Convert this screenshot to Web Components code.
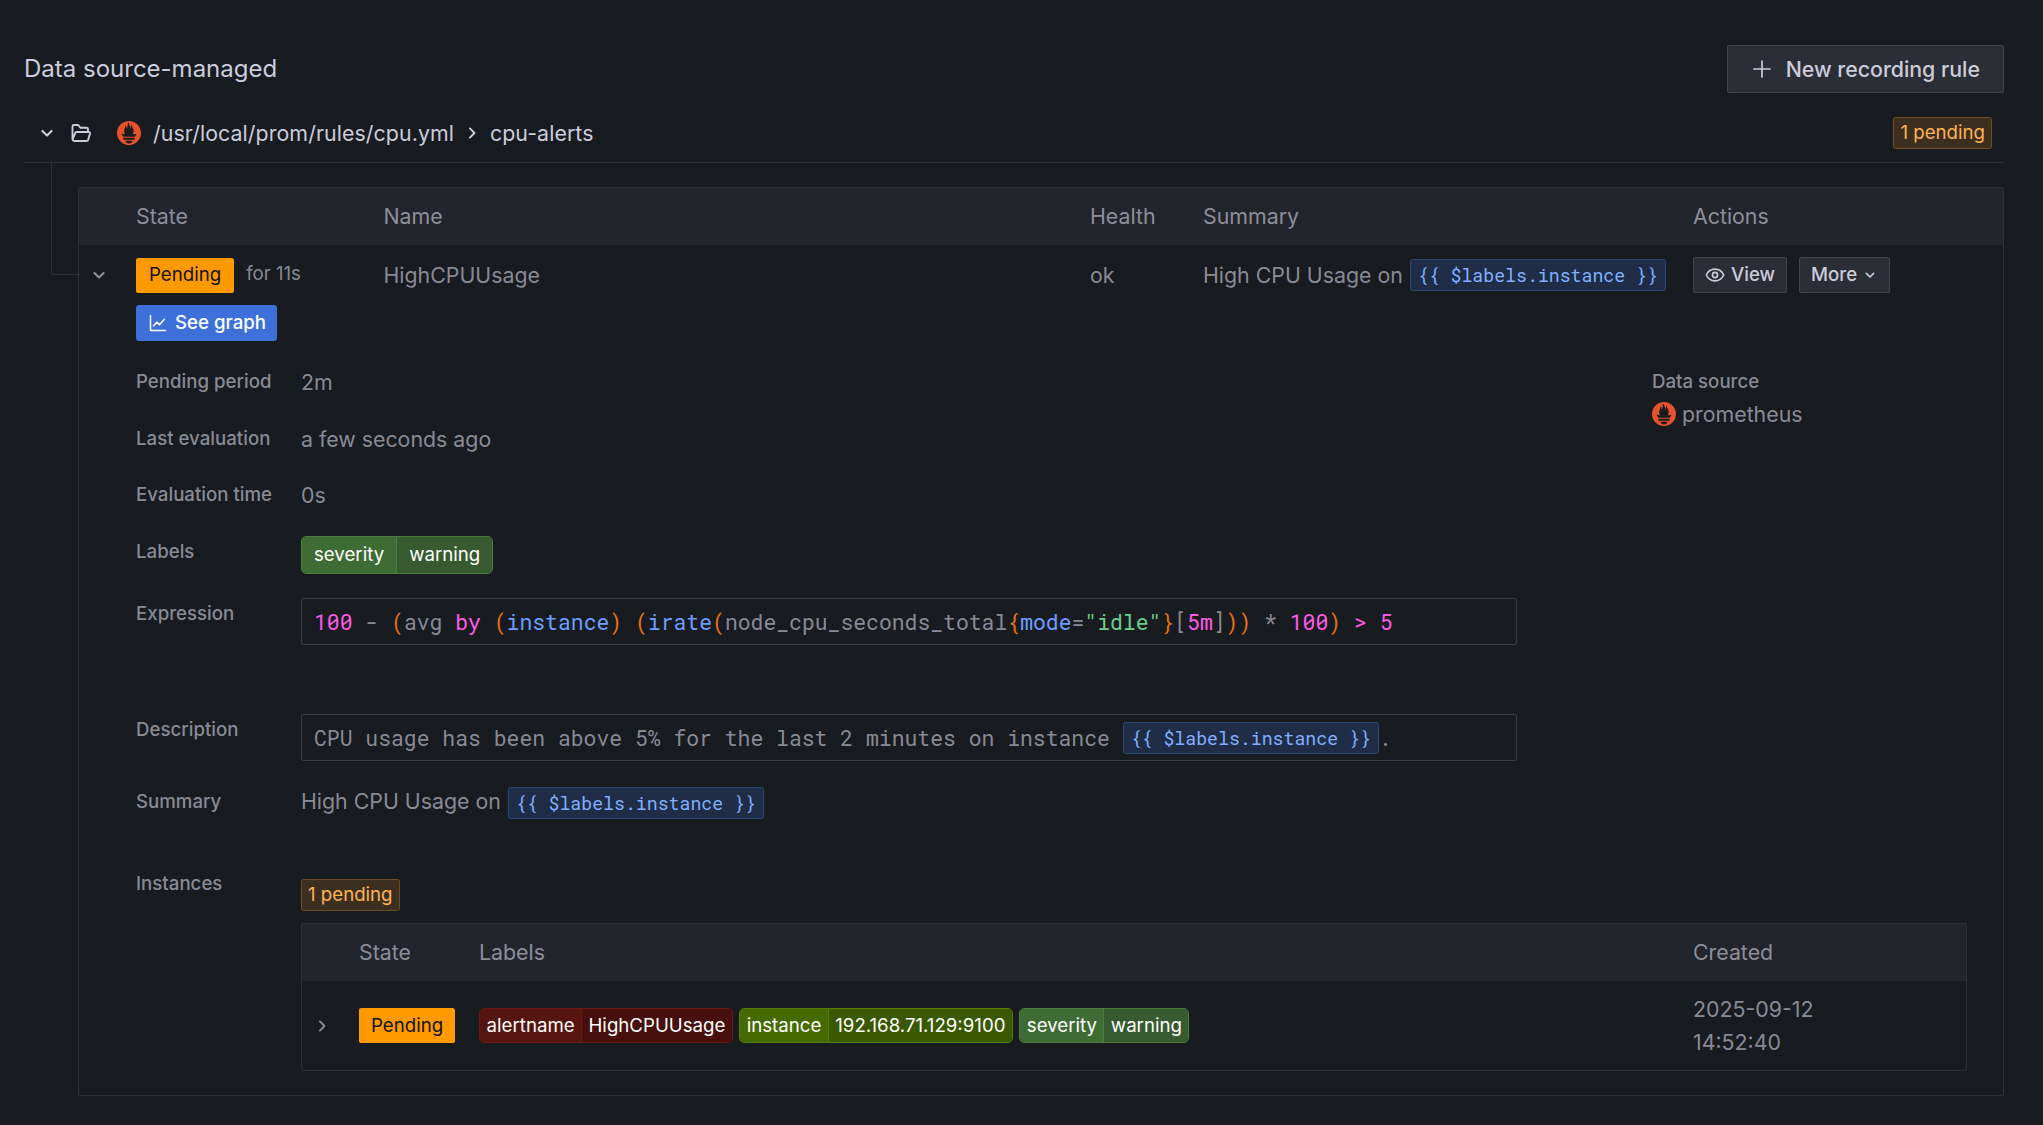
<!DOCTYPE html>
<html lang="en"><head><meta charset="utf-8"><title>Data source-managed</title>
<style>
html,body{margin:0;background:#181b1f}
body{font:21.33px/28px Inter,"Noto Sans",sans-serif;color:#ccccdc}
</style></head><body>
<gf-page>
  <gf-section-head>
    <span slot="title">Data source-managed</span>
    <gf-btn size="lg" slot="action"><gf-icon name="plus" size="24"></gf-icon>New recording rule</gf-btn>
  </gf-section-head>
  <gf-group-head>
    <gf-icon name="down" size="20"></gf-icon>
    <gf-icon name="folder" size="24"></gf-icon>
    <gf-icon name="prom" size="24" style="margin-left:12px"></gf-icon>
    <span slot="path">/usr/local/prom/rules/cpu.yml</span>
    <gf-icon slot="path" name="right" size="20"></gf-icon>
    <span slot="path">cpu-alerts</span>
    <gf-count slot="end">1 pending</gf-count>
  </gf-group-head>
  <gf-rule-box>
    <gf-row head style="--cols:57px 247.5px 706.5px 113px 490px 1fr">
      <span></span><span>State</span><span>Name</span><span>Health</span><span>Summary</span><span>Actions</span>
    </gf-row>
    <gf-row style="--cols:57px 247.5px 706.5px 113px 490px 1fr">
      <gf-cell><gf-icon name="down" size="20" style="margin-left:10px"></gf-icon></gf-cell>
      <gf-stack>
        <gf-cell><gf-state>Pending</gf-state><gf-muted>for 11s</gf-muted></gf-cell>
        <gf-btn kind="primary" style="padding-right:10px"><gf-icon name="chart" size="20"></gf-icon>See graph</gf-btn>
      </gf-stack>
      <gf-cell>HighCPUUsage</gf-cell>
      <gf-cell>ok</gf-cell>
      <gf-cell style="gap:7px">High CPU Usage on <gf-tpl>{{ $labels.instance }}</gf-tpl></gf-cell>
      <gf-cell><gf-btn><gf-icon name="eye" size="22" style="margin:0 -2px 0 -1px"></gf-icon>View</gf-btn><gf-btn>More<gf-icon name="down" size="16" style="margin-left:-2px"></gf-icon></gf-btn></gf-cell>
    </gf-row>
    <gf-details>
      <gf-field style="--h:57px"><span slot="label">Pending period</span>2m</gf-field>
      <gf-field style="--h:56px"><span slot="label">Last evaluation</span>a few seconds ago</gf-field>
      <gf-field style="--h:57px"><span slot="label">Evaluation time</span>0s</gf-field>
      <gf-field style="--h:63px;--nudge:-3px"><span slot="label">Labels</span><gf-labels><gf-label k="severity" v="warning" tone="green"></gf-label></gf-labels></gf-field>
      <gf-field style="--h:116px;--nudge:-4px;--ln:0px"><span slot="label">Expression</span><gf-promql></gf-promql></gf-field>
      <gf-field style="--h:71px;--nudge:-4px;--ln:0px"><span slot="label">Description</span><gf-codebox>CPU usage has been above 5% for the last 2 minutes on instance <gf-tpl>{{ $labels.instance }}</gf-tpl>.</gf-codebox></gf-field>
      <gf-field style="--h:81px;--nudge:-2px"><span slot="label">Summary</span>High CPU Usage on <gf-tpl style="margin-left:1px">{{ $labels.instance }}</gf-tpl></gf-field>
      <gf-source slot="side"></gf-source>
      <gf-field slot="bottom" wide style="--nudge:9px;--ln:2px"><span slot="label">Instances</span>
        <gf-stack gap="12">
          <gf-count>1 pending</gf-count>
          <gf-inner>
            <gf-row head style="--cols:57px 120px 1214px 1fr"><span></span><span>State</span><span>Labels</span><span>Created</span></gf-row>
            <gf-row inner style="--cols:57px 120px 1214px 1fr">
              <gf-cell><gf-icon name="right" size="20" style="margin-left:10px"></gf-icon></gf-cell>
              <gf-cell><gf-state style="padding:0 12px">Pending</gf-state></gf-cell>
              <gf-labels>
                <gf-label k="alertname" v="HighCPUUsage" tone="red" tight></gf-label>
                <gf-label k="instance" v="192.168.71.129:9100" tone="lime" tight></gf-label>
                <gf-label k="severity" v="warning" tone="green" tight></gf-label>
              </gf-labels>
              <gf-date>2025-09-12<br>14:52:40</gf-date>
            </gf-row>
          </gf-inner>
        </gf-stack>
      </gf-field>
    </gf-details>
  </gf-rule-box>
</gf-page>
<script>
const ICONS={
 plus:'<path d="M12 4v16M4 12h16" fill="none" stroke="currentColor" stroke-width="1.7" stroke-linecap="round"/>',
 down:'<path d="M6.5 9.500 12 15l5.500-5.500" fill="none" stroke="currentColor" stroke-width="2.500" stroke-linecap="round" stroke-linejoin="round"/>',
 right:'<path d="M9.500 6.500 15 12l-5.500 5.500" fill="none" stroke="currentColor" stroke-width="2.300" stroke-linecap="round" stroke-linejoin="round"/>',
 folder:'<path d="M3.500 18V5.500a1.500 1.500 0 0 1 1.500-1.500h4.200l2.300 2.800h6a1.500 1.500 0 0 1 1.500 1.500V11M3.500 18.600c.2.800.8 1.400 1.700 1.400h12.400c.8 0 1.400-.5 1.600-1.200l1.800-6.300c.2-.8-.4-1.500-1.200-1.500H7.700c-.7 0-1.300.4-1.500 1.100z" fill="none" stroke="currentColor" stroke-width="1.900" stroke-linejoin="round"/>',
 chart:'<path d="M3 3v17a1 1 0 0 0 1 1h17" fill="none" stroke="currentColor" stroke-width="1.800" stroke-linecap="round"/><path d="M6.500 15.500 10.500 11l3.200 3 6-6.500" fill="none" stroke="currentColor" stroke-width="1.800" stroke-linecap="round" stroke-linejoin="round"/>',
 eye:'<path d="M2.500 12C4.500 7.800 8 5.600 12 5.600s7.500 2.200 9.500 6.400c-2 4.200-5.500 6.400-9.500 6.400S4.500 16.200 2.500 12z" fill="none" stroke="currentColor" stroke-width="1.800" stroke-linejoin="round"/><circle cx="12" cy="12" r="2.800" fill="none" stroke="currentColor" stroke-width="1.800"/>',
 prom:'<g transform="scale(.09375)"><path fill="#e6522c" d="M128.001.667C57.311.667 0 57.971 0 128.664c0 70.69 57.311 127.998 128.001 127.998S256 199.354 256 128.664C256 57.97 198.689.667 128 .667zm0 239.56c-20.112 0-36.419-13.435-36.419-30.004h72.838c0 16.57-16.307 30.004-36.419 30.004zm60.153-39.94H67.842V178.47h120.314v21.816h-.002zm-.432-33.045H68.185c-.398-.458-.804-.91-1.188-1.375-12.315-14.954-15.216-22.76-18.032-30.716-.048-.262 14.933 3.06 25.556 5.45 0 0 5.466 1.265 13.458 2.722-7.673-8.994-12.23-20.428-12.23-32.116 0-25.658 19.68-48.079 12.58-66.201 6.91.562 14.304 14.583 14.804 36.505 7.346-10.152 10.42-28.69 10.42-40.056 0-11.769 7.755-25.44 15.512-25.907-6.915 11.396 1.79 21.165 9.53 45.4 2.902 9.103 2.532 24.423 4.772 34.138.744-20.178 4.213-49.62 17.014-59.784-5.647 12.8.836 28.818 5.27 36.518 7.154 12.424 11.49 21.836 11.49 39.638 0 11.936-4.407 23.173-11.84 31.958 8.452-1.586 14.289-3.016 14.289-3.016l27.45-5.355c.002-.002-3.987 16.401-19.314 32.197z"/></g>'
};
function def(name,html,extra){
  const T=document.createElement('template');T.innerHTML=html;
  customElements.define(name,class extends HTMLElement{
    constructor(){super();this.attachShadow({mode:'open'}).appendChild(T.content.cloneNode(true));}
    connectedCallback(){extra&&extra.call(this);}
  });
}
const MONO='"Roboto Mono","DejaVu Sans Mono","Liberation Mono",monospace';
const BORDER='rgba(204,204,220,.12)';
def('gf-page',`<style>:host{display:block;padding:45px 39px 29px 24px}</style><slot></slot>`);
def('gf-section-head',`<style>:host{display:flex;justify-content:space-between;align-items:center;height:48px}
 .t{font-size:24px;line-height:30px;color:#ccccdc}</style><div class="t"><slot name="title"></slot></div><slot name="action"></slot>`);
def('gf-group-head',`<style>:host{display:flex;align-items:center;box-sizing:border-box;height:70px;border-bottom:1px solid ${BORDER};padding:11px 12px 0 13px;color:#ccccdc}
 .p{display:flex;align-items:center;gap:8px;margin-left:12px;letter-spacing:.08px}.e{margin-left:auto}
 .lead{display:flex;align-items:center;gap:12px}</style>
 <div class="lead"><slot></slot></div><div class="p"><slot name="path"></slot></div><div class="e"><slot name="end"></slot></div>`);
def('gf-rule-box',`<style>:host{display:block;position:relative;margin:24px 0 0 54px;border:1px solid ${BORDER};border-radius:2px}
 :host::before{content:"";position:absolute;left:-28px;top:-25px;width:27px;height:111px;border-left:1px solid ${BORDER};border-bottom:1px solid ${BORDER}}</style><slot></slot>`);
def('gf-row',`<style>:host{display:grid;grid-template-columns:var(--cols);align-items:start;padding-top:12px;color:rgba(204,204,220,.65)}
 :host([head]){background:#22252b;height:57px;padding:0 0 1px;align-items:center;box-sizing:border-box}
 :host([inner]){height:89px;padding:0;align-items:center}</style><slot></slot>`);
def('gf-cell',`<style>:host{display:flex;align-items:center;min-height:36px;gap:12px}</style><slot></slot>`);
def('gf-stack',`<style>:host{display:flex;flex-direction:column;align-items:flex-start;gap:12px}</style><slot></slot>`);
def('gf-muted',`<style>:host{font-size:18.67px;display:inline-block;margin-top:-2px}</style><slot></slot>`);
def('gf-state',`<style>:host{display:inline-flex;align-items:center;justify-content:center;height:35px;padding:0 13px;background:#ff9900;color:#111;border-radius:2.6px;font-size:18.67px;box-sizing:border-box}</style><slot></slot>`);
def('gf-count',`<style>:host{display:inline-flex;align-items:center;height:32px;padding:0 6px;box-sizing:border-box;background:#3d2f20;border:1px solid #6e4d22;border-radius:2.6px;color:#ffb357;font-size:18.67px}</style><slot></slot>`);
def('gf-btn',`<style>:host{display:inline-flex;align-items:center;height:36px;gap:7px;padding:0 11px;box-sizing:border-box;background:#2b2e34;border:1px solid rgba(204,204,220,.14);border-radius:2.6px;color:#ccccdc;font-size:18.67px;font-weight:500;white-space:nowrap}
 :host([size=lg]){height:48px;padding:0 23px 0 22px;font-size:21.33px;gap:12px}
 :host([kind=primary]){background:#3d71d9;border-color:#3d71d9;color:#fff}</style><slot></slot>`);
def('gf-icon',`<svg viewBox="0 0 24 24" part="svg"></svg>`,function(){
  const s=this.getAttribute('size')||20,svg=this.shadowRoot.querySelector('svg');
  svg.innerHTML=ICONS[this.getAttribute('name')]||'';svg.setAttribute('width',s);svg.setAttribute('height',s);
  svg.style.display='block';this.style.display='inline-block';this.style.flex='none';
});
def('gf-tpl',`<style>:host{display:inline-flex;align-items:center;height:32px;box-sizing:border-box;padding:0 7px;background:#1f2d47;border:1px solid #2c4874;border-radius:2.6px;color:#82b0ff;font:18.2px/28px ${MONO};white-space:pre;vertical-align:middle}</style><slot></slot>`);
def('gf-details',`<style>:host{display:block;padding:28px 36px 24px 57px}
 .top{display:grid;grid-template-columns:1380px 1fr;column-gap:136px}</style>
 <div class="top"><div><slot></slot></div><div><slot name="side"></slot></div></div><slot name="bottom"></slot>`);
def('gf-field',`<style>:host{display:grid;grid-template-columns:165px 1fr;min-height:var(--h,0);color:rgba(204,204,220,.65);align-items:start}
 .l{font-size:18.67px;line-height:24px;font-weight:500;margin-top:var(--ln,1px)}.v{margin-top:var(--nudge,-1px);min-width:0}</style>
 <div class="l"><slot name="label"></slot></div><div class="v"><slot></slot></div>`);
def('gf-labels',`<style>:host{display:flex;gap:6.5px;align-items:center}</style><slot></slot>`);
def('gf-label',`<style>:host{display:inline-flex;height:var(--lh,37.6px);box-sizing:border-box;border:1px solid;border-radius:5px;font-size:18.67px;color:#fff;overflow:hidden;white-space:nowrap}
 :host([tight]){--lh:35px}
 span{display:flex;align-items:center;padding:0 12px}:host([tight]) span{padding:0 6.3px 0 6.6px}
 .k{background:var(--k);border-right:1px solid var(--b)}.v{background:var(--v)}
 :host([tone=green]){--k:#3f6b35;--v:#375a30;--b:#4a7d3e;border-color:#4a7d3e}
 :host([tone=red]){--k:#561510;--v:#47100c;--b:#6b1a13;border-color:#6b1a13}
 :host([tone=lime]){--k:#456b00;--v:#3a5800;--b:#537f00;border-color:#537f00}</style>
 <span class="k"></span><span class="v"></span>`,function(){
  this.shadowRoot.querySelector('.k').textContent=this.getAttribute('k');
  this.shadowRoot.querySelector('.v').textContent=this.getAttribute('v');
});
const BOX=`display:flex;align-items:center;height:47px;box-sizing:border-box;width:1216px;padding:0 12px;border:1px solid rgba(204,204,220,.2);border-radius:2.6px;font:21.4px/28px ${MONO};white-space:pre`;
def('gf-codebox',`<style>:host{${BOX};color:rgba(204,204,220,.65)}div{display:flex;align-items:center}</style><div><slot></slot></div>`);
def('gf-promql',`<style>:host{${BOX};color:rgba(204,204,220,.65)}
 .n{color:#ff5ce6}.p{color:#e8711a}.f{color:#6e9fff}.s{color:#6ccf8e}</style>
 <div><span class="n">100</span> - <span class="p">(</span>avg <span class="n">by</span> <span class="p">(</span><span class="f">instance</span><span class="p">)</span> <span class="p">(</span><span class="f">irate</span><span class="p">(</span>node_cpu_seconds_total<span class="p">{</span><span class="f">mode</span>=<span class="s">"idle"</span><span class="p">}</span>[<span class="n">5m</span>]<span class="p">))</span> * <span class="n">100</span><span class="p">)</span> <span class="n">&gt;</span> <span class="n">5</span></div>`);
def('gf-source',`<style>:host{display:block;color:rgba(204,204,220,.65)}
 .l{font-size:18.67px;line-height:24px;font-weight:500;margin-top:1px}.r{display:flex;align-items:center;gap:6px;margin-top:6px}</style>
 <div class="l">Data source</div><div class="r"><gf-icon name="prom" size="24"></gf-icon><span>prometheus</span></div>`);
def('gf-inner',`<style>:host{display:block;width:1666px;border:1px solid ${BORDER};border-radius:2px;box-sizing:border-box}</style><slot></slot>`);
def('gf-date',`<style>:host{display:block;line-height:33px}</style><slot></slot>`);
</script>
</body></html>
